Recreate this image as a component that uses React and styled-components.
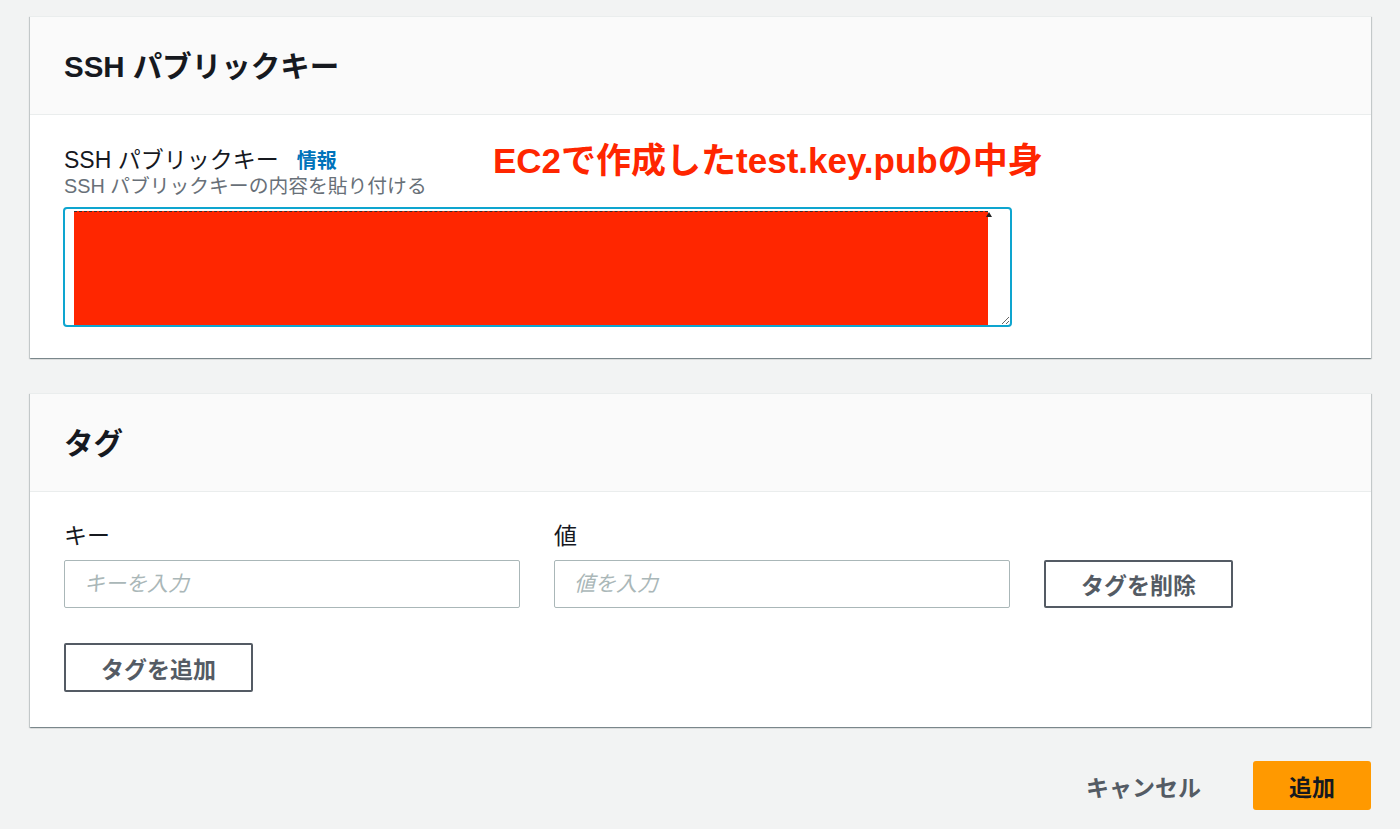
import styled, { createGlobalStyle } from "styled-components";

const GlobalStyle = createGlobalStyle`
  html, body {
    margin: 0;
    padding: 0;
    background: #f2f3f3;
  }
  body {
    font-family: "Liberation Sans", "Noto Sans CJK JP", sans-serif;
    color: #16191f;
  }
  * {
    box-sizing: border-box;
  }
`;

const Page = styled.div`
  padding: 16px 29px 20px 30px;
  display: flex;
  flex-direction: column;
  gap: 35px;
`;

const Card = styled.section`
  background: #fff;
  box-shadow: 0 1px 1px 0 rgba(0, 28, 36, 0.3),
    1px 1px 1px 0 rgba(0, 28, 36, 0.15), -1px 1px 1px 0 rgba(0, 28, 36, 0.15);
  border-top: 1px solid #eaeded;
`;

const CardHeader = styled.header`
  height: 98px;
  background: #fafafa;
  border-bottom: 1px solid #eaeded;
  display: flex;
  align-items: center;
  padding: 0 34px;
  h2 {
    margin: 0;
    font-size: 29.5px;
    line-height: 36px;
    font-weight: 700;
    margin-top: 2px;
  }
`;

const CardBody = styled.div`
  padding: ${(p) => p.$pad || "30px 34px 32px"};
`;

const LabelRow = styled.div`
  display: flex;
  align-items: baseline;
  gap: 18px;
  position: relative;
`;

const Label = styled.label`
  font-size: 23px;
  line-height: 26px;
  color: #16191f;
`;

const InfoLink = styled.a`
  font-size: 20px;
  font-weight: 700;
  color: #0073bb;
  text-decoration: none;
`;

const Note = styled.span`
  position: absolute;
  left: 429px;
  top: -2px;
  font-size: 35px;
  line-height: 36px;
  font-weight: 700;
  color: #ff2600;
  white-space: nowrap;
`;

const Description = styled.div`
  font-size: 19.8px;
  line-height: 24px;
  color: #687078;
`;

const AreaWrap = styled.div`
  position: relative;
  width: 949px;
  margin-top: 9px;
  margin-left: -1px;
`;

const TextArea = styled.textarea`
  display: block;
  width: 100%;
  height: 120px;
  border: 2px solid #0ea5cf;
  border-radius: 4px;
  outline: none;
  resize: vertical;
  padding: 4px 10px;
  font-size: 16px;
  background: #fff;
`;

const Redaction = styled.div`
  position: absolute;
  left: 11px;
  top: 4px;
  width: 914px;
  bottom: 2px;
  background: #ff2600;
  border-top: 1px dashed #333;
`;

const ScrollArrow = styled.div`
  position: absolute;
  top: 5px;
  right: 20px;
  width: 0;
  height: 0;
  border-left: 3px solid transparent;
  border-right: 3px solid transparent;
  border-bottom: 5px solid #222;
`;

const TagRow = styled.div`
  display: flex;
  align-items: flex-end;
  gap: 34px;
`;

const Field = styled.div`
  display: flex;
  flex-direction: column;
  width: 456px;
  gap: 11px;
`;

const Input = styled.input`
  height: 48px;
  border: 1px solid #aab7b8;
  border-radius: 2px;
  padding: 0 19px;
  font-size: 21px;
  font-family: inherit;
  color: #16191f;
  &::placeholder {
    color: #aab7b8;
    font-style: italic;
  }
`;

const Button = styled.button`
  height: ${(p) => p.$h || "48px"};
  width: ${(p) => p.$w || "189px"};
  border: 2px solid #545b64;
  border-radius: 2px;
  background: #fff;
  color: #545b64;
  font-family: inherit;
  font-size: 23px;
  font-weight: 700;
  cursor: pointer;
  padding: 0;
`;

const AddTagButton = styled(Button)`
  margin-top: 35px;
`;

const Footer = styled.div`
  display: flex;
  justify-content: flex-end;
  align-items: center;
  gap: 40px;
  margin-top: -1px;
`;

const LinkButton = styled.button`
  border: none;
  background: none;
  color: #545b64;
  font-family: inherit;
  font-size: 23px;
  font-weight: 700;
  padding: 0 12px;
`;

const PrimaryButton = styled.button`
  height: 49px;
  width: 118px;
  border: none;
  border-radius: 3px;
  background: #ff9900;
  color: #16191f;
  font-family: inherit;
  font-size: 23px;
  font-weight: 700;
`;

export default function App() {
  return (
    <>
      <GlobalStyle />
      <Page>
        <Card>
          <CardHeader>
            <h2>SSH パブリックキー</h2>
          </CardHeader>
          <CardBody $pad="30px 34px 31px">
            <LabelRow>
              <Label>SSH パブリックキー</Label>
              <InfoLink href="#">情報</InfoLink>
              <Note>EC2で作成したtest.key.pubの中身</Note>
            </LabelRow>
            <Description>SSH パブリックキーの内容を貼り付ける</Description>
            <AreaWrap>
              <TextArea defaultValue="" />
              <Redaction />
              <ScrollArrow />
            </AreaWrap>
          </CardBody>
        </Card>
        <Card>
          <CardHeader>
            <h2>タグ</h2>
          </CardHeader>
          <CardBody $pad="31px 34px 35px">
            <TagRow>
              <Field>
                <Label>キー</Label>
                <Input placeholder="キーを入力" />
              </Field>
              <Field>
                <Label>値</Label>
                <Input placeholder="値を入力" />
              </Field>
              <Button>タグを削除</Button>
            </TagRow>
            <AddTagButton $h="49px">タグを追加</AddTagButton>
          </CardBody>
        </Card>
        <Footer>
          <LinkButton>キャンセル</LinkButton>
          <PrimaryButton>追加</PrimaryButton>
        </Footer>
      </Page>
    </>
  );
}
